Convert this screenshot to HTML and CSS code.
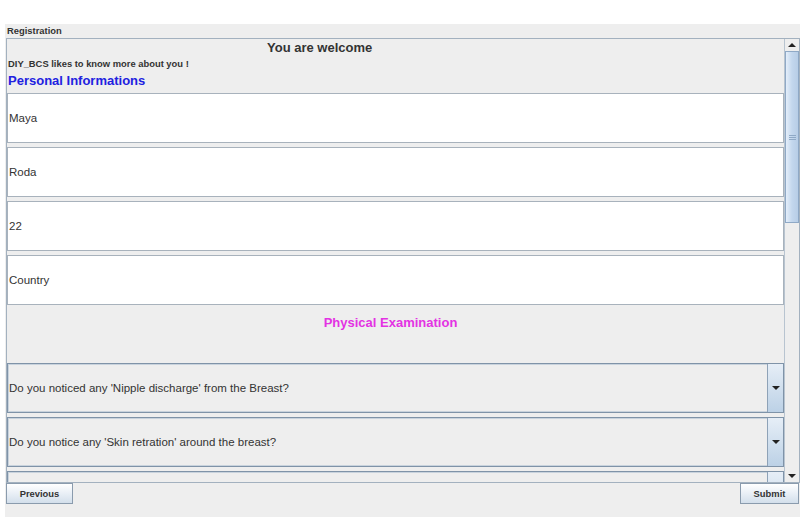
FILE: index.html
```html
<!DOCTYPE html>
<html lang="en">
<head>
  <meta charset="UTF-8" />
  <meta name="viewport" content="width=device-width, initial-scale=1.0">
  <title>Registration</title>
  <link rel="stylesheet" href="styles.css">
</head>
<body>
  <div class="frame">
    <div class="frame-title">Registration</div>

    <div class="scroll-pane">
      <div class="viewport">
        <div class="welcome">You are welcome</div>
        <div class="intro">DIY_BCS likes to know more about you !</div>
        <div class="section-personal">Personal Informations</div>

        <div class="field">Maya</div>
        <div class="field">Roda</div>
        <div class="field">22</div>
        <div class="field">Country</div>

        <div class="section-physical">Physical Examination</div>

        <div class="combo">
          <div class="combo-text">Do you noticed any 'Nipple discharge' from the Breast?</div>
          <div class="combo-btn"><span class="arrow-down"></span></div>
        </div>
        <div class="combo">
          <div class="combo-text">Do you notice any 'Skin retration' around the breast?</div>
          <div class="combo-btn"><span class="arrow-down"></span></div>
        </div>
        <!-- next question, scrolled out of view -->
        <div class="combo">
          <div class="combo-text"></div>
          <div class="combo-btn"></div>
        </div>
      </div>

      <div class="scrollbar">
        <div class="sb-btn"><span class="arrow-up"></span></div>
        <div class="sb-track">
          <div class="sb-thumb"><span class="grip"></span></div>
        </div>
        <div class="sb-btn"><span class="arrow-down"></span></div>
      </div>
    </div>

    <div class="button-row">
      <button class="btn btn-prev">Previous</button>
      <button class="btn btn-submit">Submit</button>
    </div>
  </div>
</body>
</html>
```

FILE: styles.css
```css
body {
  margin: 0;
  padding: 0;
  background-color: white;
  font-family: "Liberation Sans", Arial, sans-serif;
  color: #333333;
}
.frame {
  margin-top: 24px;
  margin-left: 5px;
  width: 795px;
  height: 493px;
  background-color: #eeeeee;
}
.frame-title {
  height: 14px;
  line-height: 14px;
  font-size: 9.4px;
  font-weight: bold;
  padding-left: 2px;
}
/* the scroll pane with its own vertical scrollbar */
.scroll-pane {
  margin-left: 1px;
  width: 792px;
  height: 443px;
  border: 1px solid #a3b1bf;
  display: flex;
}
.viewport {
  flex: 1;
  overflow: hidden;
  padding-top: 1px;
}
.welcome {
  height: 16px;
  line-height: 16px;
  font-size: 13px;
  font-weight: bold;
  padding-left: 260px;
}
.intro {
  height: 15px;
  line-height: 15px;
  font-size: 9.4px;
  font-weight: bold;
  padding-left: 1px;
}
.section-personal {
  height: 20px;
  line-height: 20px;
  font-size: 13px;
  font-weight: bold;
  color: #2121e0;
  padding-left: 1px;
  margin-bottom: 2px;
}
.field {
  box-sizing: border-box;
  height: 50px;
  margin-bottom: 4px;
  background-color: white;
  border: 1px solid #a8b2bc;
  display: flex;
  align-items: center;
  padding-left: 1px;
  font-size: 11.5px;
}
.section-physical {
  height: 48px;
  padding-top: 6px;
  line-height: 16px;
  font-size: 13px;
  font-weight: bold;
  color: #e332e3;
  text-align: center;
  padding-right: 10px;
}
.combo {
  box-sizing: border-box;
  height: 50px;
  margin-bottom: 4px;
  border: 1px solid #7f93a8;
  box-shadow: inset 0 0 0 1px #c9d3dd;
  background-color: #eeeeee;
  display: flex;
}
.combo-text {
  flex: 1;
  display: flex;
  align-items: center;
  padding-left: 1px;
  font-size: 11.5px;
}
.combo-btn {
  width: 15px;
  border-left: 1px solid #8ea2b7;
  background: linear-gradient(#e6eef7, #d3e1ef 45%, #bcd1e6);
  display: flex;
  align-items: center;
  justify-content: center;
}
.arrow-down {
  width: 0;
  height: 0;
  border-left: 4px solid transparent;
  border-right: 4px solid transparent;
  border-top: 4px solid #222222;
}
.arrow-up {
  width: 0;
  height: 0;
  border-left: 4px solid transparent;
  border-right: 4px solid transparent;
  border-bottom: 4px solid #222222;
}
.scrollbar {
  width: 14px;
  display: flex;
  flex-direction: column;
  border-left: 1px solid #b8c4d0;
}
.sb-btn {
  height: 12px;
  display: flex;
  align-items: center;
  justify-content: center;
  background-color: #eeeeee;
}
.sb-track {
  flex: 1;
  background-color: #eeeeee;
}
.sb-thumb {
  box-sizing: border-box;
  height: 172px;
  border: 1px solid #8fa9c6;
  background: linear-gradient(90deg, #e4eefa, #c3d7ed 50%, #b7cde6);
  display: flex;
  align-items: center;
  justify-content: center;
}
.grip {
  width: 7px;
  height: 1px;
  background-color: #8fa9c6;
  box-shadow: 0 2px 0 #8fa9c6, 0 4px 0 #8fa9c6;
  margin-bottom: 4px;
}
.button-row {
  display: flex;
  justify-content: space-between;
  padding-left: 1px;
  padding-right: 1px;
}
.btn {
  height: 21px;
  padding: 0;
  line-height: 19px;
  font-family: "Liberation Sans", Arial, sans-serif;
  font-size: 9.4px;
  font-weight: bold;
  color: #333333;
  border: 1px solid #8a9bad;
  background: linear-gradient(#ffffff, #e9eff6 50%, #d3dfeb);
}
.btn-prev {
  width: 67px;
}
.btn-submit {
  width: 59px;
}
```
